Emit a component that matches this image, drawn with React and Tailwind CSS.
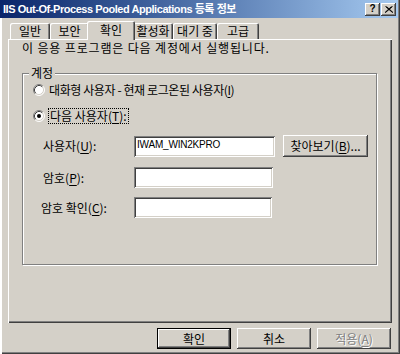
import React from "react";

const raised =
  "shadow-[inset_-1px_-1px_#404040,inset_1px_1px_#ffffff,inset_-2px_-2px_#808080,inset_2px_2px_#d4d0c8]";
const sunken =
  "shadow-[inset_1px_1px_#808080,inset_-1px_-1px_#ffffff,inset_2px_2px_#404040,inset_-2px_-2px_#d4d0c8]";

const Radio = ({ checked }) => (
  <svg width="12" height="12" viewBox="0 0 12 12" className="shrink-0">
    <circle cx="6" cy="6" r="5" fill="#ffffff" />
    <path d="M2.11 9.89 A5.5 5.5 0 0 1 9.89 2.11" fill="none" stroke="#808080" />
    <path d="M9.89 2.11 A5.5 5.5 0 0 1 2.11 9.89" fill="none" stroke="#ffffff" />
    <path d="M2.82 9.18 A4.5 4.5 0 0 1 9.18 2.82" fill="none" stroke="#404040" />
    <path d="M9.18 2.82 A4.5 4.5 0 0 1 2.82 9.18" fill="none" stroke="#d4d0c8" />
    {checked && <circle cx="6" cy="6" r="2" fill="#000000" />}
  </svg>
);

const Key = ({ children }) => <span className="underline underline-offset-2">{children}</span>;

const tabs = [
  { label: "일반", w: "w-[40px]" },
  { label: "보안", w: "w-[39px]" },
  { label: "확인", w: "w-[48px]", active: true },
  { label: "활성화", w: "w-[40px]" },
  { label: "대기 중", w: "w-[44px]" },
  { label: "고급", w: "w-[42px]" },
];

const TitleBar = () => (
  <div className="h-[18px] w-[398px] shrink-0 flex items-center bg-gradient-to-r from-[#0a246a] to-[#a6caf0] pl-[3px] pr-[2px]">
    <span className="text-white text-[11px] font-bold leading-none tracking-[-0.45px] font-['Liberation_Sans','Noto_Sans_CJK_KR',sans-serif] whitespace-nowrap">
      IIS Out-Of-Process Pooled Applications 등록 정보
    </span>
    <div className="ml-auto flex items-center gap-[1px]">
      <div className={`w-[15px] h-[13px] bg-[#d4d0c8] flex items-center justify-center ${raised}`}>
        <span className="text-[10px] font-bold leading-none text-black font-['Liberation_Sans',sans-serif]">?</span>
      </div>
      <div className={`w-[15px] h-[13px] bg-[#d4d0c8] flex items-center justify-center ${raised}`}>
        <svg width="8" height="7" viewBox="0 0 8 7">
          <path d="M0.5 0.5 L7.5 6.5 M1.5 0.5 L8 6.5 M7.5 0.5 L0.5 6.5 M6.5 0.5 L0 6.5" stroke="#000" strokeWidth="1" fill="none" />
        </svg>
      </div>
    </div>
  </div>
);

const Tabs = () => (
  <div className="h-[18px] mt-[3px] px-[8px] flex items-end shrink-0">
    <div className="w-[2px]" />
    {tabs.map((t) =>
      t.active ? (
        <div
          key={t.label}
          className={`${t.w} h-[19px] -mx-[2px] mb-[-1px] relative z-10 bg-[#d4d0c8] rounded-t-[2px] shadow-[inset_1px_1px_#ffffff,inset_-1px_0_#404040,inset_-2px_0_#808080] flex justify-center pt-[1px] text-[12px] leading-[16px]`}
        >
          {t.label}
        </div>
      ) : (
        <div
          key={t.label}
          className={`${t.w} h-[16px] bg-[#d4d0c8] rounded-t-[2px] shadow-[inset_1px_1px_#ffffff,inset_-1px_0_#404040,inset_-2px_0_#808080] flex justify-center text-[12px] leading-[16px]`}
        >
          {t.label}
        </div>
      )
    )}
  </div>
);

const Field = ({ label, w, value, mt }) => (
  <div className={`flex items-center ${mt}`}>
    <div className="w-[111px] pl-[20px] text-[12px] leading-[14px] whitespace-nowrap">{label}</div>
    <div className={`${w} h-[21px] bg-white ${sunken} flex items-start pt-[4px] pl-[3px]`}>
      {value && (
        <span className="text-[10px] leading-none text-black font-['Liberation_Sans',sans-serif] tracking-[-0.2px]">{value}</span>
      )}
    </div>
  </div>
);

export default function App() {
  return (
    <div className="w-[400px] h-[354px] bg-[#d4d0c8] flex flex-col overflow-hidden text-black font-['Noto_Sans_CJK_KR','Liberation_Sans',sans-serif] shadow-[inset_2px_0_#ffffff,inset_-1px_-1px_#404040,inset_-2px_-2px_#808080]">
      <TitleBar />
      <Tabs />

      {/* tab panel */}
      <div className="mx-[8px] w-[384px] h-[284px] shrink-0 shadow-[inset_1px_1px_#ffffff,inset_-1px_-1px_#404040,inset_-2px_-2px_#808080] pt-[2px] pl-[14px]">
        <p className="text-[12px] leading-[14px] tracking-[0.85px]">이 응용 프로그램은 다음 계정에서 실행됩니다.</p>

        {/* group box */}
        <div className="relative mt-[18px] w-[355px] h-[192px] border border-[#808080] shadow-[1px_1px_0_#ffffff,inset_1px_1px_0_#ffffff]">
          <span className="absolute -top-[8px] left-[6px] bg-[#d4d0c8] px-[2px] text-[12px] leading-[14px]">계정</span>

          <div className="flex flex-col pt-[8px]">
            <div className="flex items-center h-[16px] pl-[10px] gap-[4px]">
              <Radio />
              <span className="text-[12px] leading-[14px] whitespace-nowrap tracking-[-0.4px]">
                대화형 사용자 - 현재 로그온된 사용자(<Key>I</Key>)
              </span>
            </div>
            <div className="flex items-center h-[16px] mt-[10px] pl-[10px] gap-[3px]">
              <Radio checked />
              <span className="text-[12px] leading-[14px] whitespace-nowrap border border-dotted border-black px-[1px]">
                다음 사용자(<Key>T</Key>):
              </span>
            </div>

            <div className="flex items-center mt-[11px]">
              <Field label={<>사용자(<Key>U</Key>):</>} w="w-[141px]" value="IWAM_WIN2KPRO" mt="" />
              <div className={`ml-[8px] w-[85px] h-[22px] bg-[#d4d0c8] ${raised} flex items-center justify-center text-[12px] leading-none whitespace-nowrap`}>
                찾아보기(<Key>B</Key>)...
              </div>
            </div>
            <Field label={<>암호(<Key>P</Key>):</>} w="w-[139px]" mt="mt-[10px]" />
            <Field label={<span className="-ml-[2px]">암호 확인(<Key>C</Key>):</span>} w="w-[138px]" mt="mt-[9px]" />
          </div>
        </div>
      </div>

      {/* dialog buttons */}
      <div className="mt-[5px] pr-[9px] flex justify-end gap-[6px]">
        <div className="w-[74px] h-[21px] border border-black">
          <div className={`w-full h-full bg-[#d4d0c8] ${raised} flex items-center justify-center text-[12px] leading-none`}>
            확인
          </div>
        </div>
        <div className={`w-[74px] h-[21px] bg-[#d4d0c8] ${raised} flex items-center justify-center text-[12px] leading-none`}>
          취소
        </div>
        <div className={`w-[74px] h-[21px] bg-[#d4d0c8] ${raised} flex items-center justify-center text-[12px] leading-none text-[#808080] [text-shadow:1px_1px_0_#ffffff]`}>
          적용(<Key>A</Key>)
        </div>
      </div>
    </div>
  );
}
